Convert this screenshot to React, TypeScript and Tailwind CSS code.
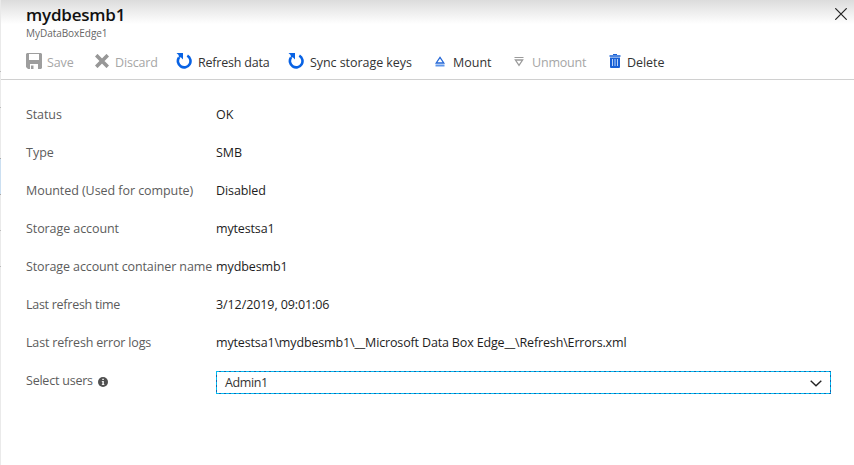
import type { ReactNode } from 'react';

const font = "font-['Open_Sans','Noto_Sans',sans-serif]";

function SaveIcon() {
  return (
    <svg className="mb-[2px]" width="16" height="16" viewBox="0 0 16 16">
      <path d="M1 0h14l1 1v14l-1 1H2l-2-2V1z" fill="#9e9e9e" />
      <path d="M3 1h10v6H3zM4 11h8v5H4z" fill="#fff" />
      <path d="M5 12.500h2.500V16H5z" fill="#9e9e9e" />
    </svg>
  );
}

function DiscardIcon() {
  return (
    <svg className="mb-[2px]" width="14" height="14" viewBox="0 0 14 14" stroke="#979797" strokeWidth="3.7">
      <path d="M1.200 1.200l11.600 11.600M12.800 1.200L1.200 12.800" />
    </svg>
  );
}

function RefreshIcon() {
  return (
    <svg className="mb-[2px]" width="16" height="16" viewBox="0 0 16 16" fill="none">
      <path d="M11.300 2.600A6.300 6.300 0 1 1 3 4.500" stroke="#0862e4" strokeWidth="2.600" />
      <path d="M0.500 0H7v6.500L4.800 4.300 3 5 2.600 2.100z" fill="#0862e4" />
    </svg>
  );
}

function MountIcon() {
  return (
    <svg className="mb-[2px]" width="10" height="11" viewBox="0 0 10 11" fill="none">
      <path d="M5 1.300L8.800 7H1.200z" stroke="#2467d6" strokeWidth="1.300" />
      <path d="M0.500 9.500h9" stroke="#5f96ea" strokeWidth="2" />
    </svg>
  );
}

function UnmountIcon() {
  return (
    <svg className="mb-[2px]" width="10" height="11" viewBox="0 0 10 11" fill="none" stroke="#9b9b9b">
      <path d="M0.500 1.500h9" strokeWidth="1" />
      <path d="M1.400 4h7.200L5 9.300z" strokeWidth="1.300" />
    </svg>
  );
}

function DeleteIcon() {
  return (
    <svg className="mb-[2px]" width="12" height="14" viewBox="0 0 12 14" fill="none">
      <path d="M4 0.500h4" stroke="#1760d6" />
      <path d="M0.500 2h11" stroke="#1760d6" strokeWidth="1.500" />
      <path d="M1 3.500h10V13a1 1 0 0 1-1 1H2a1 1 0 0 1-1-1z" fill="#1760d6" />
      <path d="M3.500 5v7M6 5v7M8.500 5v7" stroke="#b9d2f8" />
    </svg>
  );
}

function Command({ icon, label, box, off, track }: { icon: ReactNode; label: string; box: string; off?: boolean; track: string }) {
  return (
    <div className={`flex h-[16px] shrink-0 items-center ${box}`}>
      {icon}
      <span className={`mt-[2px] whitespace-nowrap ${track} ${off ? 'text-[#a6a6a6]' : 'text-[#333]'}`}>{label}</span>
    </div>
  );
}

const rows = [
  ['Status', 'OK', 'tracking-[-0.1px]', ''],
  ['Type', 'SMB', '', ''],
  ['Mounted (Used for compute)', 'Disabled', 'tracking-[-0.06px]', 'tracking-[-0.1px]'],
  ['Storage account', 'mytestsa1', 'tracking-[-0.08px]', 'tracking-[-0.15px]'],
  ['Storage account container name', 'mydbesmb1', 'tracking-[-0.11px]', 'tracking-[-0.1px]'],
  ['Last refresh time', '3/12/2019, 09:01:06', 'tracking-[-0.27px]', 'tracking-[-0.09px]'],
  [
    'Last refresh error logs',
    'mytestsa1\\mydbesmb1\\__Microsoft Data Box Edge__\\Refresh\\Errors.xml',
    'tracking-[-0.17px]',
    'tracking-[-0.15px]',
  ],
];

export default function App() {
  return (
    <div className={`flex h-[465px] w-[854px] overflow-hidden bg-white text-[12.5px] leading-[16px] ${font}`}>
      <div className="flex w-px shrink-0 flex-col bg-[#eaeaea]">
        <i className="mt-[71px] h-px bg-[#bbb]" />
        <i className="mt-[35px] h-px bg-[#bbb]" />
        <i className="mt-[50px] h-px bg-[#aaa]" />
        <i className="h-[35px] bg-[#cbdff1]" />
        <i className="h-px bg-[#aaa]" />
        <i className="mt-[35px] h-px bg-[#bbb]" />
        <i className="mt-[35px] h-px bg-[#bbb]" />
      </div>
      <main className="flex min-w-0 flex-1 flex-col">
        <header className="flex h-[80px] shrink-0 flex-col border-b border-[#d0d0d0] bg-[linear-gradient(#dcdcdc,#ffffff_24px)]">
          <div className="flex h-[54px] justify-between pl-[25px] pr-[7px]">
            <div className="flex flex-col">
              <h1 className="mt-[4px] text-[17px] font-semibold leading-[22px] tracking-[-0.2px] text-[#111]">mydbesmb1</h1>
              <p className="text-[10px] leading-[14px] tracking-[-0.04px] text-[#666]">MyDataBoxEdge1</p>
            </div>
            <svg className="mt-[8px]" width="12" height="12" viewBox="0 0 12 12" stroke="#222" strokeWidth="1.200">
              <path d="M0.300 0.300l11.400 11.400M11.700 0.300L0.300 11.700" />
            </svg>
          </div>
          <nav className="flex pl-[25px]">
            <Command icon={<SaveIcon />} label="Save" box="w-[69px] gap-[5px]" off track="tracking-[-0.1px]" />
            <Command icon={<DiscardIcon />} label="Discard" box="w-[81px] gap-[6px]" off track="tracking-[-0.15px]" />
            <Command icon={<RefreshIcon />} label="Refresh data" box="w-[112px] gap-[6px]" track="tracking-[-0.2px]" />
            <Command icon={<RefreshIcon />} label="Sync storage keys" box="w-[147px] gap-[6px]" track="tracking-[-0.06px]" />
            <Command icon={<MountIcon />} label="Mount" box="w-[79px] gap-[8px]" track="" />
            <Command icon={<UnmountIcon />} label="Unmount" box="w-[95px] gap-[8px]" off track="tracking-[-0.2px]" />
            <Command icon={<DeleteIcon />} label="Delete" box="gap-[6px]" track="tracking-[-0.05px]" />
          </nav>
        </header>
        <section className="flex flex-col pl-[25px] pt-[16px]">
          {rows.map(([label, value, labelTrack, valueTrack]) => (
            <div key={label} className="flex h-[38px] items-center">
              <span className={`w-[190px] shrink-0 whitespace-nowrap text-[#5c5c5c] ${labelTrack}`}>{label}</span>
              <span className={`whitespace-nowrap text-[#1d1d1d] ${valueTrack}`}>{value}</span>
            </div>
          ))}
          <div className="flex h-[38px] items-center">
            <div className="flex w-[190px] shrink-0 items-center gap-[5px] text-[#5c5c5c]">
              <span className="tracking-[-0.22px]">Select users</span>
              <svg className="mt-[2px]" width="10" height="10" viewBox="0 0 10 10">
                <circle cx="5" cy="5" r="5" fill="#505050" />
                <path d="M4.300 1.800h1.500v1.200H4.300zM3.800 4h2v3.200h.6V8H3.800v-.8h.6V4.800h-.6z" fill="#fff" />
              </svg>
            </div>
            <div className="mt-[3px] h-[23px] w-[615px] bg-[repeating-linear-gradient(90deg,#00bcf2_0_3px,#1464ae_3px_5px)] py-px">
              <div className="h-full bg-[repeating-linear-gradient(180deg,#00bcf2_0_3px,#1464ae_3px_5px)] px-px">
                <div className="flex h-full items-center justify-between bg-white pl-[8px] pr-[8px] text-[#333]">
                  <span className="mt-px tracking-[-0.4px]">Admin1</span>
                  <svg className="mt-[2px]" width="12" height="7" viewBox="0 0 12 7" fill="none" stroke="#222" strokeWidth="1.400">
                    <path d="M0.700 0.700L6 5.700l5.300-5" />
                  </svg>
                </div>
              </div>
            </div>
          </div>
        </section>
      </main>
    </div>
  );
}
